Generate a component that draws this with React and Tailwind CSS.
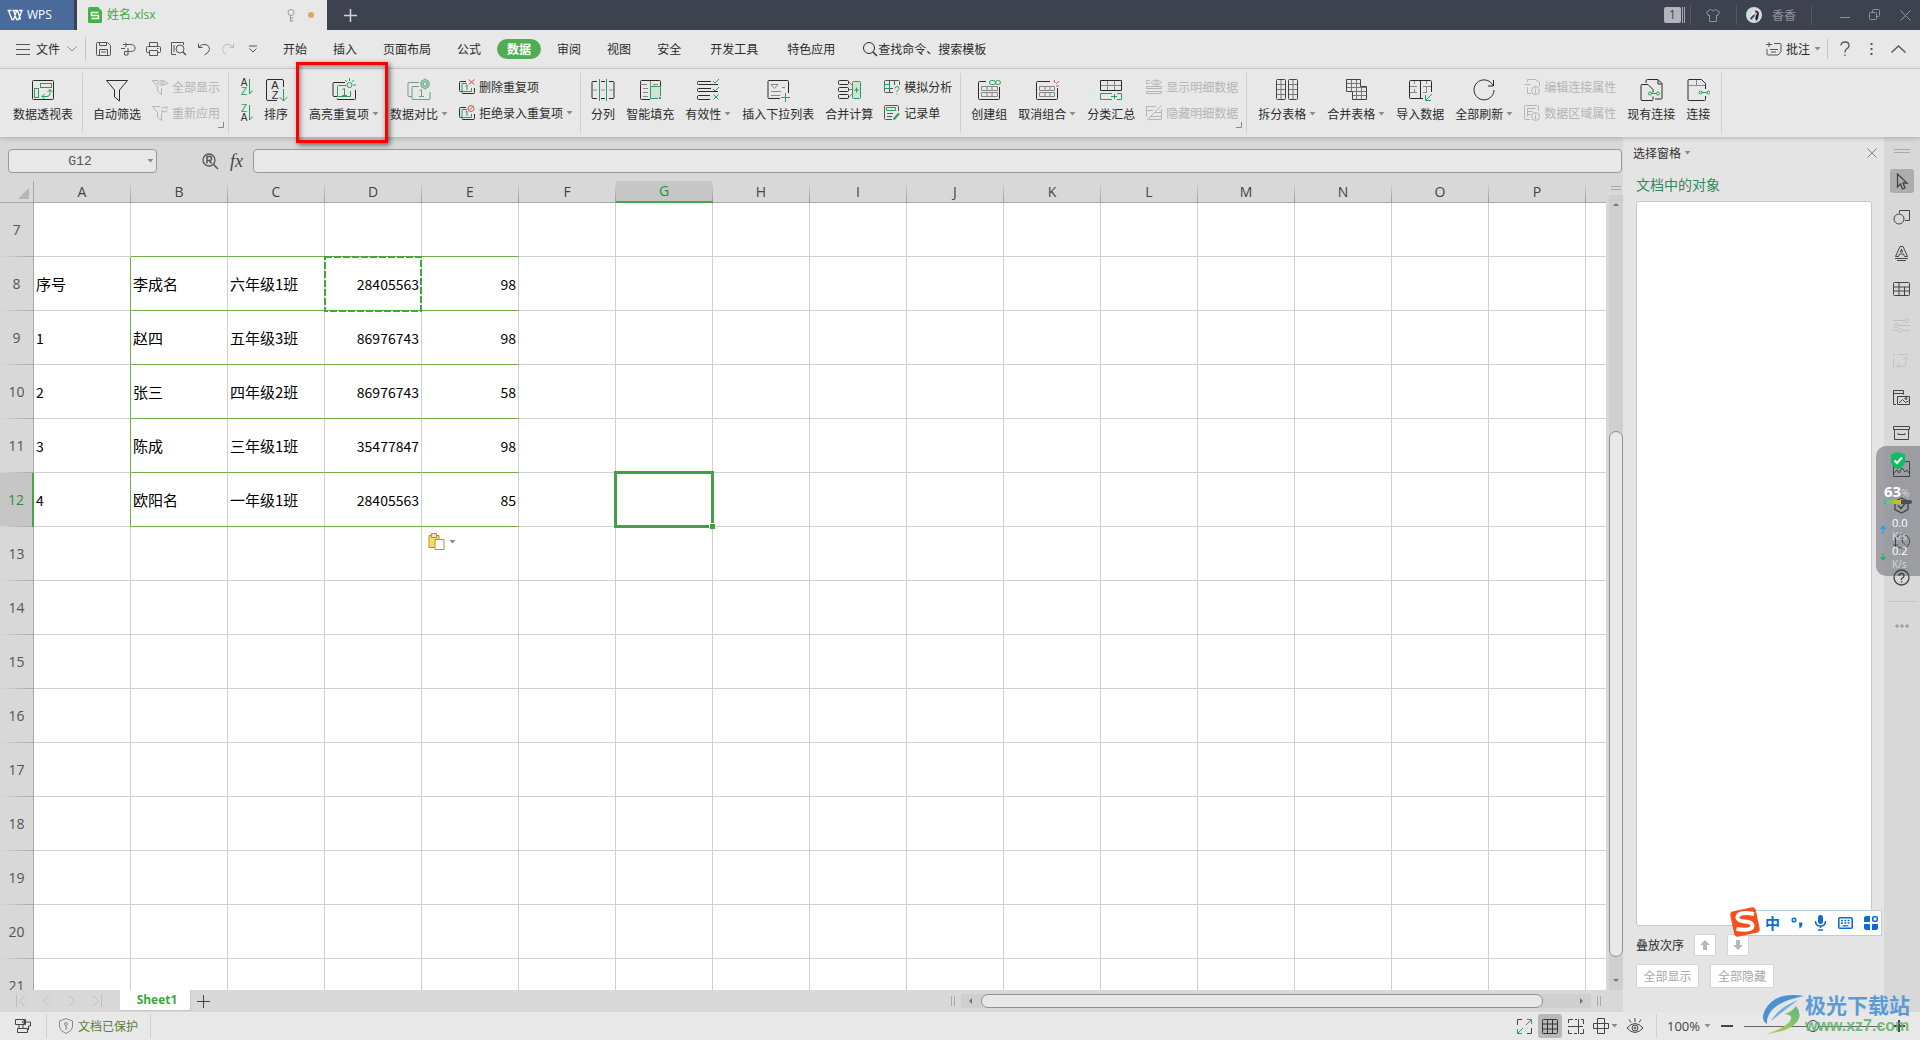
import React from 'react';
import clsx from 'clsx';

const GREEN = '#2a9d5c';
const RED = '#d9534f';

const COLUMNS = ['A', 'B', 'C', 'D', 'E', 'F', 'G', 'H', 'I', 'J', 'K', 'L', 'M', 'N', 'O', 'P'];
const ROWS = [7, 8, 9, 10, 11, 12, 13, 14, 15, 16, 17, 18, 19, 20, 21];

const CELLS = {
  8: { A: '序号', B: '李成名', C: '六年级1班', D: 28405563, E: 98 },
  9: { A: '1', B: '赵四', C: '五年级3班', D: 86976743, E: 98 },
  10: { A: '2', B: '张三', C: '四年级2班', D: 86976743, E: 58 },
  11: { A: '3', B: '陈成', C: '三年级1班', D: 35477847, E: 98 },
  12: { A: '4', B: '欧阳名', C: '一年级1班', D: 28405563, E: 85 },
};

function Icon({ w = 24, h = w, className, children }) {
  return (
    <svg
      width={w}
      height={h}
      viewBox={`0 0 ${w} ${h}`}
      fill="none"
      stroke="currentColor"
      className={clsx('shrink-0', className)}
      aria-hidden="true"
    >
      {children}
    </svg>
  );
}

function Glyph({ x, y, size = 12, color = 'currentColor', children }) {
  return (
    <text x={x} y={y} fontSize={size} fill={color} stroke="none" textAnchor="middle" fontFamily="Liberation Sans, sans-serif">
      {children}
    </text>
  );
}

function Caret({ className }) {
  return (
    <Icon w={7} h={4} className={clsx('text-[#8a8a8a]', className)}>
      <path d="M0.5 0h6l-3 3.5z" fill="currentColor" stroke="none" />
    </Icon>
  );
}

/* ---------- ribbon icons, 24x24 ---------- */

const PivotIcon = () => (
  <Icon>
    <rect x="1.5" y="2.5" width="21" height="19" rx="1" />
    <g stroke={GREEN}>
      <rect x="9.5" y="5.5" width="11" height="4" />
      <rect x="3.5" y="10.5" width="4" height="9" />
      <path d="M11 18.5h5q3 0 3-3v-4M16.500 14l2.500-2.500 2.500 2.500M13.500 16l-2.500 2.500 2.500 2.500" />
    </g>
  </Icon>
);

const FilterIcon = () => (
  <Icon>
    <path d="M1.500 2.500h21l-8 9.500v11l-5-4v-7z" />
  </Icon>
);

const SortBoxIcon = () => (
  <Icon>
    <path d="M13 22.500H4q-1.500 0-1.500-1.500V3q0-1.500 1.500-1.500h14q1.500 0 1.500 1.500v6" />
    <Glyph x={11} y={11} size={11}>A</Glyph>
    <Glyph x={11} y={21} size={11}>Z</Glyph>
    <path d="M19.500 11v12M15.500 19l4 4 4-4" stroke={GREEN} />
  </Icon>
);

const HighlightIcon = () => (
  <Icon>
    <path d="M13 4.500H2q-1 0-1 1v12q0 1 1 1h3M23.500 12v8.500q0 1-1 1H6q-1 0-1-1" />
    <path d="M14 7.500H6.500q-1 0-1 1v10h13V13M10.500 11.500l2-1v7.500M10 17.500h5" stroke={GREEN} />
    <g stroke={GREEN}>
      <circle cx="17.500" cy="7" r="2.500" />
      <path d="M17.500 0v3M13 2l2 2M22 2l-2 2M24 7h-3" />
    </g>
  </Icon>
);

const CompareIcon = () => (
  <Icon className="text-[#8a8f8c]">
    <path d="M12 4.500H2q-1 0-1 1v12q0 1 1 1h3" />
    <path d="M12 8.500H6q-1 0-1 1v11q0 1 1 1h16q1 0 1-1V14" stroke="#5fa57f" />
    <path d="M12.500 12.500l2-1v7M12 18.500h5" stroke="#5fa57f" />
    <path d="M18 1l4 2.500v5L18 11l-4-2.500v-5z" fill="#a9c9b6" stroke="#6ba888" />
    <circle cx="18" cy="6" r="2" stroke="#6ba888" fill="#e8e8e8" />
  </Icon>
);

const SplitIcon = () => (
  <Icon>
    <path d="M6 3.500H2q-1 0-1 1v15q0 1 1 1h4M18 3.500h4q1 0 1 1v15q0 1-1 1h-4M10 3.500h4M10 20.500h4" />
    <path d="M1 12h5M10 12h4M18 12h5" stroke="#888" />
    <path d="M8.500 1v22M15.500 1v22" stroke={GREEN} />
  </Icon>
);

const SmartFillIcon = () => (
  <Icon>
    <path d="M22.500 8V3.500q0-1-1-1h-18q-1 0-1 1v17q0 1 1 1H12" />
    <path d="M12.500 3v5M2 6.500h7M15 6.500h5M5 10.500h5M5 14.500h5M5 18.500h5" stroke="#888" />
    <path d="M20 20.500h-7.500v-12h10V18" fill="#cfe3d7" stroke={GREEN} />
    <rect x="21" y="19" width="2" height="2" fill={GREEN} stroke="none" />
  </Icon>
);

const ValidIcon = () => (
  <Icon>
    <path d="M15 3.500H2.500q-1 0-1 1v1q0 1 1 1H22M15 10.500H2.500q-1 0-1 1v1q0 1 1 1H22M14 17.500H2.500q-1 0-1 1v2q0 1 1 1H14" />
    <path d="M17 3l2 2 4-4M17 11l2 2 4-4M17.500 16.500l5 5M22.500 16.500l-5 5" stroke={GREEN} />
  </Icon>
);

const DropListIcon = () => (
  <Icon>
    <path d="M22.500 15V3.500q0-1-1-1H3q-1 0-1 1v16q0 1 1 1h11" />
    <path d="M5 6.500h7l-3.500 4zM5 13.500h10M5 17.500h9M16 9.500h3" stroke="#888" />
    <path d="M15 19.500h9M19.500 15v9" stroke={GREEN} />
  </Icon>
);

const MergeCalcIcon = () => (
  <Icon>
    <rect x="1.500" y="2.500" width="10" height="4" rx="1" />
    <rect x="1.500" y="9.500" width="10" height="4" rx="1" />
    <rect x="1.500" y="16.500" width="10" height="4" rx="1" />
    <path d="M12 4l3 3M12 11.500h3M12 19l3-3" stroke="#888" />
    <rect x="15.500" y="3.500" width="8" height="17" rx="1" fill="#cfe3d7" stroke={GREEN} />
    <path d="M17 12h5M19.500 9.500v5" stroke={GREEN} />
  </Icon>
);

const GroupIcon = () => (
  <Icon>
    <path d="M9 3.500H2.500q-1 0-1 1v16q0 1 1 1h19q1 0 1-1V9" />
    <path d="M4.500 8.500h16v4h-16zM4.500 14.500h16v4h-16zM10 8.500v4M15 8.500v4M10 14.500v4M15 14.500v4" stroke="#888" />
    <rect x="12.500" y="2.500" width="6" height="4" rx="2" stroke={GREEN} />
    <rect x="18.500" y="2.500" width="5" height="4" rx="2" stroke={GREEN} />
  </Icon>
);

const UngroupIcon = () => (
  <Icon>
    <path d="M15 3.500H2.500q-1 0-1 1v16q0 1 1 1h19q1 0 1-1V10" />
    <path d="M4.500 8.500h15v4h-15zM4.500 14.500h15v4h-15zM10 8.500v4M15 8.500v4M10 14.500v4M15 14.500v4" stroke="#888" />
    <path d="M19 2l1 3M24 3l-3 3M24 8h-3" stroke={RED} />
  </Icon>
);

const SubtotalIcon = () => (
  <Icon>
    <path d="M1.500 2.500h21v10h-21z" />
    <path d="M2 7.500h20M8.500 3v9M15.500 3v9" stroke="#888" />
    <path d="M13 15.500H1.500v6H13M18 15.500h4.500v6H18M12 18.500h6M15.500 16v5" stroke={GREEN} />
  </Icon>
);

const SplitTableIcon = () => (
  <Icon className="text-[#444]">
    <rect x="1.500" y="1.500" width="9" height="20" rx="1" />
    <rect x="13.500" y="1.500" width="9" height="20" rx="1" />
    <path d="M2 6.500h8M2 11.500h8M2 16.500h8M6 2v19M14 6.500h8M14 11.500h8M14 16.500h8M18 2v19" stroke="#777" />
  </Icon>
);

const MergeTableIcon = () => (
  <Icon className="text-[#444]">
    <path d="M2.500 1.500h14v7h6v13h-14v-8h-6z" />
    <path d="M3 5.500h13M3 9.500h19M9 13.500h13M9 17.500h13M7.500 2v11M12.500 2v19M17.500 9v12" stroke="#777" />
  </Icon>
);

const ImportIcon = () => (
  <Icon>
    <path d="M15 20.500H2.500q-1 0-1-1v-16q0-1 1-1h20q1 0 1 1V14M12.500 3v17" />
    <path d="M2 8.500h7M15 8.500h8M2 14.500h7M15 14.500h4M6.500 3v3M6.500 11v3M18.500 3v3M18.500 9v5" stroke="#888" />
    <path d="M24 16l-6 6M17.500 17v5.500H23" stroke={GREEN} />
  </Icon>
);

const RefreshIcon = () => (
  <Icon>
    <path d="M21 7.500A10 10 0 1 0 22 12M21.500 2v6H16" />
  </Icon>
);

const ConnectionsIcon = () => (
  <Icon>
    <path d="M7 5V3q0-1.500 1.500-1.500H19l4 4V20q0 1-1 1h-6M9 6.500H3q-1 0-1 1v14q0 1 1 1h10q1 0 1-1v-3M9 6.500l5 5v3M19 2v4h4" />
    <path d="M12 15.500h6" stroke={GREEN} />
    <circle cx="11" cy="15.500" r="1.500" stroke={GREEN} />
    <circle cx="19" cy="15.500" r="1.500" stroke={GREEN} />
  </Icon>
);

const ConnectIcon = () => (
  <Icon>
    <path d="M19.500 11V5.500l-4-4H3q-1 0-1 1v19q0 1 1 1h15.500q1 0 1-1V18" />
    <path d="M2 7.500h17M10.500 2v5" stroke="#888" />
    <path d="M15.500 14.500h6" stroke={GREEN} />
    <circle cx="14.500" cy="14.500" r="1.500" stroke={GREEN} />
    <circle cx="22.500" cy="14.500" r="1.500" stroke={GREEN} />
  </Icon>
);

/* ---------- small ribbon icons, 16x16 ---------- */

const ShowAllIcon = () => (
  <Icon w={16}>
    <path d="M6 1.500H.5l5 6V12l4 3.500V9" />
    <path d="M5 4q5-5 10.500 0Q10 8.500 5 4z" />
    <circle cx="10.500" cy="4" r="1.500" />
  </Icon>
);

const ReapplyIcon = () => (
  <Icon w={16}>
    <path d="M8 1.500H.5l5 6V12l4 3.500V9M9.500 3.500q3-3 5.500 0V1M15.500 5.500q-3 3-5.500 0v3" />
  </Icon>
);

const RemoveDupIcon = () => (
  <Icon w={16}>
    <path d="M7 2.500H1.500q-1 0-1 1v8q0 1 1 1H3M15.500 9v4.500q0 1-1 1H4q-1 0-1-1" />
    <path d="M8 4.500H3v8h9.500V9M6.500 7l1.500-1v5" stroke={GREEN} />
    <path d="M9.500.5l6 5M15.500.5l-6 5" stroke={RED} />
  </Icon>
);

const RejectDupIcon = () => (
  <Icon w={16}>
    <path d="M7 2.500H1.500q-1 0-1 1v8q0 1 1 1H3M15.500 9v4.500q0 1-1 1H4q-1 0-1-1" />
    <path d="M8 4.500H3v8h9.500V9M6.500 7l1.500-1v5" stroke={GREEN} />
    <circle cx="12" cy="3.500" r="3" stroke={RED} />
    <path d="M10 5.500l4-4" stroke={RED} />
  </Icon>
);

const WhatIfIcon = () => (
  <Icon w={16}>
    <path d="M9 13.500H1.500q-1 0-1-1v-10q0-1 1-1h13q1 0 1 1V6M5.500 2v11M10.500 2v4M1 9.500h8" stroke="#555" />
    <path d="M.5 5.500h5v4h-5z" stroke={GREEN} />
    <path d="M11 9.500q0-2 2-2t2 2q0 1-2 2.500v1M13 14.500v1" stroke={GREEN} />
  </Icon>
);

const RecordIcon = () => (
  <Icon w={16}>
    <path d="M8 14.500H1.500q-1 0-1-1v-12q0-1 1-1h12q1 0 1 1V6M3 8.500h6M3 11.500h5" stroke="#555" />
    <path d="M2.500 2.500h9v3h-9z" stroke={GREEN} />
    <path d="M9.500 14.500l5.500-6" stroke={GREEN} strokeWidth="2" />
  </Icon>
);

const ShowDetailIcon = () => (
  <Icon w={16}>
    <path d="M4 1.500H.5v3H4M.5 7.500h15v2H.5zM.5 12.500h15v2H.5z" />
    <path d="M5 3.500q5-5 10.500 0-5.500 5-10.500 0z" />
    <circle cx="10.500" cy="3.500" r="1.500" />
  </Icon>
);

const HideDetailIcon = () => (
  <Icon w={16}>
    <path d="M.5 1.500H10M.5 5.500H7M.5 1.500v10M.5 15.500l15-15M8 7.500h7.500M5 11.500h10.500M3 14.500h12.500v-10" />
  </Icon>
);

const EditLinkIcon = () => (
  <Icon w={16}>
    <path d="M3.500 3V.5h8l4 3V7M3.500 8v6.500H7M.5 5.500h6" />
    <circle cx="11.500" cy="11.500" r="4" />
    <path d="M11.500 10.500v4M11.500 8.500v1" />
  </Icon>
);

const RangeAttrIcon = () => (
  <Icon w={16}>
    <path d="M6 14.500H1.500q-1 0-1-1v-12q0-1 1-1h12q1 0 1 1V6M3.500 3.500h8M3.500 6.500h5M3.500 9.500h3M3.500 3.500v8" />
    <circle cx="11.500" cy="11.500" r="4" />
    <path d="M11.500 10.500v4M11.500 8.500v1" />
  </Icon>
);

function SortIcon({ first, second, firstColor, secondColor }) {
  return (
    <Icon w={14} h={18}>
      <Glyph x={5} y={8} size={10} color={firstColor}>{first}</Glyph>
      <Glyph x={5} y={17} size={10} color={secondColor}>{second}</Glyph>
      <path d="M10.500 1v15M13.500 12.500l-3 3.500" stroke={GREEN} />
    </Icon>
  );
}

/* ---------- ribbon ---------- */

function BigButton({ icon, label, caret, className, children }) {
  return (
    <button type="button" className={clsx('relative flex shrink-0 flex-col items-center gap-1 pt-[9px] text-[#2b2b2b]', className)}>
      {icon}
      <span className="flex items-center gap-[3px] leading-4 whitespace-nowrap">
        {label}
        {caret && <Caret />}
      </span>
      {children}
    </button>
  );
}

function SmallColumn({ items, disabled }) {
  return (
    <div className={clsx('flex shrink-0 flex-col gap-[10px] pt-[10px]', disabled ? 'text-[#b5b5b5]' : 'text-[#2b2b2b]')}>
      {items.map((item) => (
        <button key={item.label} type="button" disabled={disabled} className="flex items-center gap-1 leading-4 whitespace-nowrap">
          {item.icon}
          <span className="flex items-center gap-[3px]">
            {item.label}
            {item.caret && <Caret />}
          </span>
        </button>
      ))}
    </div>
  );
}

function RibbonGroup({ corner, className, children }) {
  return (
    <div className={clsx('relative my-1 flex shrink-0 gap-[11px] border-r border-[#cfcfcf]', className)}>
      {children}
      {corner && (
        <Icon w={6} className="absolute right-1 bottom-[5px] text-[#888]">
          <path d="M5.500 0v5.500H0" />
        </Icon>
      )}
    </div>
  );
}

function Ribbon() {
  return (
    <div className="relative z-10 flex h-[68px] shrink-0 bg-[#e8e8e8] shadow-[0_1px_5px_rgba(0,0,0,0.22)] [&>div>*]:-mt-1">
      <RibbonGroup className="pr-[9px] pl-[13px]">
        <BigButton icon={<PivotIcon />} label="数据透视表" />
      </RibbonGroup>
      <RibbonGroup className="pr-2 pl-[10px]" corner>
        <BigButton icon={<FilterIcon />} label="自动筛选" />
        <SmallColumn
          disabled
          items={[
            { icon: <ShowAllIcon />, label: '全部显示' },
            { icon: <ReapplyIcon />, label: '重新应用' },
          ]}
        />
      </RibbonGroup>
      <RibbonGroup className="pr-[7px] pl-[10px]">
        <div className="flex flex-col gap-2 pt-[9px]">
          <button type="button" aria-label="升序">
            <SortIcon first="A" second="Z" firstColor="#333" secondColor={GREEN} />
          </button>
          <button type="button" aria-label="降序">
            <SortIcon first="Z" second="A" firstColor={GREEN} secondColor="#333" />
          </button>
        </div>
        <BigButton icon={<SortBoxIcon />} label="排序" />
        <BigButton icon={<HighlightIcon />} label="高亮重复项" caret className="ml-[10px]">
          {/* callout frame */}
          <span className="pointer-events-none absolute -top-[7px] -left-[13px] h-[81px] w-[92px] border-[3px] border-[#ff0000] shadow-[2px_2px_5px_rgba(0,0,0,0.55),inset_1px_1px_5px_rgba(0,0,0,0.5)]" />
        </BigButton>
        <BigButton icon={<CompareIcon />} label="数据对比" caret />
        <SmallColumn
          items={[
            { icon: <RemoveDupIcon />, label: '删除重复项' },
            { icon: <RejectDupIcon />, label: '拒绝录入重复项', caret: true },
          ]}
        />
      </RibbonGroup>
      <RibbonGroup className="pr-2 pl-[10px]">
        <BigButton icon={<SplitIcon />} label="分列" />
        <BigButton icon={<SmartFillIcon />} label="智能填充" />
        <BigButton icon={<ValidIcon />} label="有效性" caret />
        <BigButton icon={<DropListIcon />} label="插入下拉列表" />
        <BigButton icon={<MergeCalcIcon />} label="合并计算" />
        <SmallColumn
          items={[
            { icon: <WhatIfIcon />, label: '模拟分析' },
            { icon: <RecordIcon />, label: '记录单' },
          ]}
        />
      </RibbonGroup>
      <RibbonGroup className="pr-2 pl-[10px]" corner>
        <BigButton icon={<GroupIcon />} label="创建组" />
        <BigButton icon={<UngroupIcon />} label="取消组合" caret />
        <BigButton icon={<SubtotalIcon />} label="分类汇总" />
        <SmallColumn
          disabled
          items={[
            { icon: <ShowDetailIcon />, label: '显示明细数据' },
            { icon: <HideDetailIcon />, label: '隐藏明细数据' },
          ]}
        />
      </RibbonGroup>
      <RibbonGroup className="pr-[11px] pl-[11px]">
        <BigButton icon={<SplitTableIcon />} label="拆分表格" caret />
        <BigButton icon={<MergeTableIcon />} label="合并表格" caret />
        <BigButton icon={<ImportIcon />} label="导入数据" />
        <BigButton icon={<RefreshIcon />} label="全部刷新" caret />
        <SmallColumn
          disabled
          items={[
            { icon: <EditLinkIcon />, label: '编辑连接属性' },
            { icon: <RangeAttrIcon />, label: '数据区域属性' },
          ]}
        />
        <BigButton icon={<ConnectionsIcon />} label="现有连接" />
        <BigButton icon={<ConnectIcon />} label="连接" />
      </RibbonGroup>
    </div>
  );
}

/* ---------- title bar and menu ---------- */

function TitleBar() {
  return (
    <header className="flex h-[30px] shrink-0 bg-[#3e424e] text-[#8f939d]">
      <button type="button" className="flex w-[74px] items-center gap-1 bg-[#4a6a9c] pl-[7px] font-['Open_Sans',sans-serif] text-[12px] text-white">
        <Icon w={16} h={12}>
          <path d="M.5 1.500h4M1.500 1.500l3.500 9h1.500l3-8.500M5.500 1.500h5l3 9M6.500 1.500l3 9h2l3.500-9h-3" strokeWidth="1.300" />
        </Icon>
        WPS
      </button>
      <div className="ml-[3px] flex w-[250px] items-center bg-[#e8e8e8] pr-[13px] pl-[11px]">
        <Icon w={14} h={16}>
          <path d="M1.500 0H10l4 4v10.500q0 1.500-1.500 1.500h-11Q0 16 0 14.500v-13Q0 0 1.500 0z" fill="#45b045" stroke="none" />
          <path d="M10.500 5.500h-7v3h7v3h-7" stroke="#fff" strokeWidth="1.500" />
        </Icon>
        <span className="ml-[5px] font-['Open_Sans','Noto_Sans_CJK_SC',sans-serif] text-[12px] text-[#3ea73e]">姓名.xlsx</span>
        <Icon w={8} h={13} className="ml-auto text-[#999]">
          <circle cx="4" cy="3.500" r="3" />
          <path d="M3.500 6.500v6M3.500 9h3M3.500 12h3" />
        </Icon>
        <span className="ml-[13px] size-[6px] rounded-full bg-[#e8a35a]" />
      </div>
      <button type="button" aria-label="新建" className="ml-[17px] text-[#d0d2d6]">
        <Icon w={13}>
          <path d="M6.500 0v13M0 6.500h13" strokeWidth="1.500" />
        </Icon>
      </button>
      <div className="ml-auto flex items-center pr-[9px]">
        <span className="flex h-4 items-center gap-px">
          <span className="flex h-4 w-[17px] items-center justify-center rounded-[2px] bg-[#b3b5ba] font-['Open_Sans',sans-serif] text-[12px] text-[#444]">1</span>
          <span className="h-4 w-px bg-[#a5a7ad]" />
          <span className="h-4 w-px bg-[#a5a7ad]" />
        </span>
        <span className="ml-[5px] h-5 w-px bg-[#555964]" />
        <Icon w={14} h={13} className="ml-[15px]">
          <path d="M4.500.5L.5 3l1.500 3.500 1.500-.5v6.500h7V6l1.500.5L13.500 3 9.500.5Q7 3.500 4.500.5z" />
        </Icon>
        <span className="ml-4 h-5 w-px bg-[#555964]" />
        <svg width="16" height="16" viewBox="0 0 16 16" className="ml-[9px]" aria-hidden="true">
          <circle cx="8" cy="8" r="8" fill="#cfdce2" />
          <path d="M4 11q2-6 5-7l2 2-3 5z" fill="#f4f6f7" />
          <path d="M9 3.500q3-.5 4 2.500l-1 6-2 2q-1.500-3 0-6z" fill="#2b2730" />
          <path d="M4 11l4-4 1 2-4 4z" fill="#4a4650" />
          <circle cx="9.500" cy="6.500" r="1.500" fill="#dfae9c" />
        </svg>
        <span className="ml-[10px] text-[12px]">香香</span>
        <span className="ml-[15px] h-5 w-px bg-[#555964]" />
        <button type="button" aria-label="最小化" className="ml-7">
          <Icon w={10}>
            <path d="M0 7.500h10" />
          </Icon>
        </button>
        <button type="button" aria-label="还原" className="ml-[19px]">
          <Icon w={12}>
            <rect x=".5" y="3.500" width="7" height="7" rx="1" />
            <path d="M3.500 3V1.500q0-1 1-1h5q1 0 1 1v5q0 1-1 1H8" />
          </Icon>
        </button>
        <button type="button" aria-label="关闭" className="ml-[19px]">
          <Icon w={11}>
            <path d="M.5.5l10 10M10.500.5l-10 10" />
          </Icon>
        </button>
      </div>
    </header>
  );
}

const TABS = [
  { label: '开始' },
  { label: '插入' },
  { label: '页面布局' },
  { label: '公式' },
  { label: '数据', active: true },
  { label: '审阅' },
  { label: '视图' },
  { label: '安全' },
  { label: '开发工具', wide: true },
  { label: '特色应用' },
];

function MenuBar() {
  return (
    <nav className="flex h-[39px] shrink-0 items-center border-b border-[#d4d4d4] bg-[#e8e8e8] pr-[14px] pl-4 text-[#2b2b2b]">
      <button type="button" className="flex items-center leading-4">
        <Icon w={14} h={11}>
          <path d="M0 .5h14M0 5.500h14M0 10.500h14" stroke="#555" />
        </Icon>
        <span className="ml-[6px]">文件</span>
        <Icon w={10} h={6} className="ml-[7px] text-[#888]">
          <path d="M.5.5l4.500 4.500L9.500.5" />
        </Icon>
      </button>
      <span className="ml-2 h-6 w-px bg-[#c4c4c4]" />
      <div className="ml-[10px] flex items-center gap-[10px] text-[#555]">
        <button type="button" aria-label="保存">
          <Icon w={15} h={14}>
            <path d="M.5 1.500q0-1 1-1h10l3 3v9q0 1-1 1h-12q-1 0-1-1zM3.500.5v3h7v-3M3.500 13.500v-6h8v6M5 10h5" />
          </Icon>
        </button>
        <button type="button" aria-label="输出为PDF">
          <Icon w={15} h={14}>
            <path d="M2 2.500h7.500q4.500 0 4.500 3.500t-4.500 3.500H7v3.500H3.500V9.500H7M7 9.500V6M4 .5L6 2.500 4 5M0 6.500h4" />
          </Icon>
        </button>
        <button type="button" aria-label="打印">
          <Icon w={15} h={14}>
            <path d="M3.500 4V.5h8V4M3 10.500H1.500q-1 0-1-1v-4q0-1 1-1h12q1 0 1 1v4q0 1-1 1H12M3.500 8.500h8v5h-8zM11 6.500h1.500" />
          </Icon>
        </button>
        <button type="button" aria-label="打印预览">
          <Icon w={16} h={14}>
            <path d="M5 12.500H.5V.5h12V3M3 3v7" />
            <circle cx="9" cy="7" r="4" />
            <path d="M12 10l3 3" strokeWidth="1.500" />
          </Icon>
        </button>
        <button type="button" aria-label="撤销">
          <Icon w={14} h={14}>
            <path d="M1.500 1.500v4h4M2 5q3-3.500 7-2.500 4 1.500 3.500 5-.5 3-5 5.500" />
          </Icon>
        </button>
        <button type="button" aria-label="恢复" className="text-[#bdbdbd]">
          <Icon w={14} h={14}>
            <path d="M12.500 1.500v4h-4M12 5Q9 1.500 5 2.500 1 4 1.500 7.500 2 10.500 5 12.500" />
          </Icon>
        </button>
        <button type="button" aria-label="自定义快速访问工具栏" className="ml-1">
          <Icon w={8} h={8}>
            <path d="M0 1h8M.5 3.500L4 7l3.500-3.500" />
          </Icon>
        </button>
      </div>
      <div className="ml-[13px] flex items-center">
        {TABS.map((tab) => (
          <button
            key={tab.label}
            type="button"
            className={clsx(
              'h-5 leading-5 whitespace-nowrap',
              tab.active && 'mx-[3px] rounded-full bg-[#4fae53] px-[10px] font-bold text-white',
              !tab.active && (tab.wide ? 'px-4' : 'px-[13px]'),
            )}
          >
            {tab.label}
          </button>
        ))}
      </div>
      <button type="button" className="ml-[14px] flex items-center whitespace-nowrap">
        <Icon w={16}>
          <circle cx="7" cy="7" r="5.500" />
          <path d="M11 11l4 4" strokeWidth="1.500" />
        </Icon>
        查找命令、搜索模板
      </button>
      <div className="ml-auto flex items-center text-[#555]">
        <button type="button" className="flex items-center gap-1 whitespace-nowrap text-[#2b2b2b]">
          <Icon w={16} h={14}>
            <path d="M3 0v5M0 2.500h6M8 1.500h6q1 0 1 1v7l-3 3.500H2q-1 0-1-1V7M4 7.500h8M5 10h5" stroke="#555" />
          </Icon>
          批注
          <Caret />
        </button>
        <span className="ml-[6px] h-5 w-px bg-[#c4c4c4]" />
        <button type="button" aria-label="帮助" className="ml-3">
          <Icon w={10} h={16}>
            <path d="M1 4.500Q1 1 5 1t4 3.500Q9 6.500 6.500 8 5 9 5 11.500M5 13.500v1.500" strokeWidth="1.300" />
          </Icon>
        </button>
        <button type="button" aria-label="更多" className="ml-5">
          <Icon w={3} h={13}>
            <path d="M1.500 0v2M1.500 5v2M1.500 10v2" strokeWidth="2" />
          </Icon>
        </button>
        <button type="button" aria-label="隐藏功能区" className="ml-[18px]">
          <Icon w={15} h={8}>
            <path d="M.5 7.500L7.500 1l7 6.500" strokeWidth="1.300" />
          </Icon>
        </button>
      </div>
    </nav>
  );
}

/* ---------- sheet ---------- */

function FormulaBar() {
  return (
    <div className="flex h-[44px] shrink-0 items-start bg-[#d8d8d8] pt-3 pr-px pl-2">
      <div className="flex h-6 w-[149px] items-center rounded-[4px] border border-[#999] bg-[#e8e8e8] pr-[2px]">
        <input
          aria-label="名称框"
          defaultValue="G12"
          className="min-w-0 flex-1 bg-transparent pt-[2px] pl-1 text-center font-['Liberation_Mono',monospace] text-[13px] text-[#555] outline-none"
        />
        <Caret />
      </div>
      <button type="button" aria-label="查找" className="mt-1 ml-[45px] text-[#555]">
        <Icon w={17}>
          <circle cx="7" cy="7" r="6" strokeWidth="1.300" />
          <path d="M5 10.500v-7h3q1.500 0 1.500 2T8 7.500H5M7.500 7.500l2 3M11.500 11.500l4.500 4.500" strokeWidth="1.500" />
        </Icon>
      </button>
      <button type="button" aria-label="插入函数" className="ml-[9px] h-6 w-[17px] font-['Liberation_Serif',serif] text-[18px] leading-5 text-[#444] italic">
        fx
      </button>
      <input aria-label="编辑栏" className="ml-2 h-6 min-w-0 flex-1 rounded-[4px] border border-[#999] bg-[#e8e8e8] px-2 outline-none" />
    </div>
  );
}

function PasteOptions() {
  return (
    <button type="button" aria-label="粘贴选项" className="absolute top-[6px] left-[6px] flex items-center gap-1">
      <Icon w={17}>
        <path d="M1 2.500h10v12H1z" fill="#ffd966" stroke="#b8912c" />
        <path d="M3.500.5h5v4h-5z" fill="#e9e2cc" stroke="#b8912c" />
        <path d="M7 6.500h9v10H7z" fill="#fff" stroke="#b8912c" />
      </Icon>
      <Caret />
    </button>
  );
}

function Cell({ row, col }) {
  const value = CELLS[row]?.[col];
  const inTable = 'BCDE'.includes(col);
  return (
    <td
      className={clsx(
        'relative h-[54px] border-r border-b px-[2px] whitespace-nowrap text-black',
        inTable && row >= 7 && row <= 12 ? 'border-b-[#70ad47]' : 'border-b-[#d0d0d0]',
        col === 'A' && row >= 8 && row <= 12 ? 'border-r-[#70ad47]' : 'border-r-[#d0d0d0]',
        typeof value === 'number' && 'text-right',
        typeof value === 'number' || (col === 'A' && row > 8) ? 'text-[14px]' : 'text-[15px]',
      )}
    >
      {value}
      {row === 8 && col === 'D' && (
        <svg className="pointer-events-none absolute -top-px -left-px z-10 h-[56px] w-[99px]" aria-hidden="true">
          <rect x="1" y="1" width="96" height="54" fill="none" stroke="#3fa73f" strokeWidth="2" strokeDasharray="7 2" />
        </svg>
      )}
      {row === 12 && col === 'G' && (
        <span className="pointer-events-none absolute -inset-[2px] z-10 border-[3px] border-[#43a047]">
          <span className="absolute -right-[4px] -bottom-[4px] size-[6px] border-t border-l border-white bg-[#43a047]" />
        </span>
      )}
      {row === 13 && col === 'E' && <PasteOptions />}
    </td>
  );
}

function Sheet() {
  return (
    <div className="flex min-h-0 flex-1 bg-[#d8d8d8]">
      <div className="min-w-0 flex-1 overflow-hidden bg-white">
        <table className="w-full table-fixed border-separate border-spacing-0">
          <colgroup>
            <col className="w-[34px]" />
            {COLUMNS.map((c) => (
              <col key={c} className="w-[97px]" />
            ))}
            <col />
          </colgroup>
          <thead className="bg-[#d8d8d8] font-['Open_Sans',sans-serif] text-[14px] text-[#444]">
            <tr>
              <th className="border-r border-b border-[#a8a8a8] p-0" aria-label="全选">
                <Icon w={11} className="mt-[3px] ml-[18px]">
                  <path d="M11 0v11H0z" fill="#b5b5b5" stroke="none" />
                </Icon>
              </th>
              {COLUMNS.map((c) => (
                <th
                  key={c}
                  scope="col"
                  className={clsx(
                    'h-[22px] p-0 font-normal',
                    c === 'G' ? 'border-b-2 border-[#43a843] bg-[#c6c6c6] text-[#2f8f3a]' : 'border-b border-[#a8a8a8]',
                  )}
                >
                  <div className="flex h-5 leading-5">
                    <span className="flex-1">{c}</span>
                    <span className="w-px bg-linear-to-b from-[#d8d8d8] to-[#9c9c9c]" />
                  </div>
                </th>
              ))}
              <th className="border-b border-[#a8a8a8] p-0" />
            </tr>
          </thead>
          <tbody>
            {ROWS.map((r) => (
              <tr key={r}>
                <th
                  scope="row"
                  className={clsx(
                    "h-[54px] p-0 font-['Open_Sans',sans-serif] text-[14px] font-normal",
                    r === 12 ? 'border-r-2 border-[#43a843] bg-[#c6c6c6] text-[#2f8f3a]' : 'border-r border-[#a8a8a8] bg-[#d8d8d8] text-[#555]',
                  )}
                >
                  <div className="flex h-[54px] flex-col">
                    <span className="flex flex-1 items-center justify-center">{r}</span>
                    <span className="h-px bg-linear-to-r from-[#d8d8d8] to-[#a8a8a8]" />
                  </div>
                </th>
                {COLUMNS.map((c) => (
                  <Cell key={c} row={r} col={c} />
                ))}
                <td className="border-b border-[#d0d0d0]" />
              </tr>
            ))}
          </tbody>
        </table>
      </div>
      {/* vertical scrollbar */}
      <div className="ml-[3px] flex w-[14px] flex-col">
        <Icon w={14} className="text-[#a8a8a8]">
          <path d="M2 5.500h10M2 8.500h10" />
        </Icon>
        <div className="flex flex-1 flex-col bg-[#cfcfcf]">
          <Icon w={14} className="text-[#777]">
            <path d="M4 11h6L7 8z" fill="currentColor" stroke="none" />
          </Icon>
          <span className="grow-[223] basis-0" />
          <span className="grow-[525] basis-0 rounded-full border border-[#8f8f8f] bg-[#e8e8e8]" />
          <span className="grow-[16] basis-0" />
          <Icon w={14} h={17} className="text-[#777]">
            <path d="M4 6h6L7 9z" fill="currentColor" stroke="none" />
          </Icon>
        </div>
      </div>
    </div>
  );
}

function SheetTabs() {
  return (
    <div className="flex h-[22px] shrink-0 bg-[#d8d8d8]">
      <div className="flex min-w-0 flex-1">
        <div className="flex w-[120px] items-center pl-4 text-[#bdbdbd]">
          <button type="button" aria-label="第一张">
            <Icon w={10} h={12}>
              <path d="M.5 0v12M9 .5L3.500 6 9 11.500" />
            </Icon>
          </button>
          <button type="button" aria-label="上一张" className="ml-4">
            <Icon w={8} h={12}>
              <path d="M7 .5L1.500 6 7 11.500" />
            </Icon>
          </button>
          <button type="button" aria-label="下一张" className="ml-[18px]">
            <Icon w={8} h={12}>
              <path d="M1 .5L6.500 6 1 11.500" />
            </Icon>
          </button>
          <button type="button" aria-label="最后一张" className="ml-4">
            <Icon w={10} h={12}>
              <path d="M9.500 0v12M1 .5L6.500 6 1 11.500" />
            </Icon>
          </button>
        </div>
        <button type="button" className="h-[21px] w-[71px] border-r border-b border-[#c4c4c4] bg-white pl-1 font-['Open_Sans',sans-serif] text-[12px] font-bold text-[#3ea73e]">
          Sheet1
        </button>
        <button type="button" aria-label="新建工作表" className="ml-[6px] text-[#444]">
          <Icon w={13}>
            <path d="M6.500 0v13M0 6.500h13" />
          </Icon>
        </button>
      </div>
      {/* horizontal scrollbar */}
      <div className="flex w-5/12 items-center gap-[6px] pr-[22px] pl-1 text-[#a8a8a8]">
        <Icon w={4} h={10}>
          <path d="M.5 0v10M3.500 0v10" />
        </Icon>
        <div className="flex h-[14px] flex-1 bg-[#cfcfcf] text-[#777]">
          <Icon w={16} h={14}>
            <path d="M11 4v6L8 7z" fill="currentColor" stroke="none" />
          </Icon>
          <span className="grow-[4] basis-0" />
          <span className="grow-[564] basis-0 rounded-full border border-[#8f8f8f] bg-[#e8e8e8]" />
          <span className="grow-[32] basis-0" />
          <Icon w={16} h={14}>
            <path d="M5 4v6l3-3z" fill="currentColor" stroke="none" />
          </Icon>
        </div>
        <Icon w={4} h={10}>
          <path d="M.5 0v10M3.500 0v10" />
        </Icon>
      </div>
    </div>
  );
}

/* ---------- side panel ---------- */

function SelectionPane() {
  return (
    <aside className="flex w-[261px] shrink-0 flex-col bg-[#e4e4e4] pr-3 pb-6 pl-[13px]">
      <div className="-ml-[3px] flex h-8 items-center text-[#333]">
        <button type="button" className="flex items-center gap-[3px]">
          选择窗格
          <Caret />
        </button>
        <button type="button" aria-label="关闭窗格" className="-mr-[5px] ml-auto text-[#888]">
          <Icon w={10}>
            <path d="M.5.5l9 9M9.500.5l-9 9" />
          </Icon>
        </button>
      </div>
      <h2 className="h-8 text-[14px] leading-[31px] text-[#2e8b57]">文档中的对象</h2>
      <div className="flex-1 rounded-[3px] border border-[#c8c8c8] bg-white" />
      <div className="flex items-center pt-2 text-[#2b2b2b]">
        <span>叠放次序</span>
        <button type="button" aria-label="上移" className="ml-[10px] flex size-[22px] items-center justify-center rounded-[2px] border border-[#d4d4d4] bg-white text-[#b8b8b8]">
          <Icon w={10}>
            <path d="M5 0l5 5H7v5H3V5H0z" fill="currentColor" stroke="none" />
          </Icon>
        </button>
        <button type="button" aria-label="下移" className="ml-[11px] flex size-[22px] items-center justify-center rounded-[2px] border border-[#d4d4d4] bg-white text-[#b8b8b8]">
          <Icon w={10}>
            <path d="M5 10l5-5H7V0H3v5H0z" fill="currentColor" stroke="none" />
          </Icon>
        </button>
      </div>
      <div className="flex gap-[11px] pt-2 text-[#a8a8a8]">
        <button type="button" className="h-6 w-[63px] rounded-[2px] border border-[#d4d4d4] bg-white">全部显示</button>
        <button type="button" className="h-6 w-[64px] rounded-[2px] border border-[#d4d4d4] bg-white">全部隐藏</button>
      </div>
    </aside>
  );
}

const RAIL = [
  {
    label: '选择',
    active: true,
    icon: <path d="M4.500 1v13l3-3 2 5 2.500-1-2-5h4z" strokeWidth="1.300" />,
  },
  {
    label: '形状',
    icon: (
      <>
        <circle cx="6" cy="10" r="5" />
        <path d="M6.500 4V1.500h10v10H12" />
      </>
    ),
  },
  {
    label: '样式',
    icon: <path d="M2.500 11.500L7 1.500h3l4.500 10h-3l-1-2.500h-4l-1 2.500zM7.500 7h2l-1-3zM2 13.500h13M4 15.500h9" />,
  },
  {
    label: '表格',
    icon: <path d="M.5 2.500q0-1 1-1h14q1 0 1 1v11q0 1-1 1h-14q-1 0-1-1zM1 6h16M1 10h16M6 2v12M11.500 6v8" />,
  },
  {
    label: '属性',
    muted: true,
    icon: (
      <>
        <path d="M0 3.500h12M5 8.500h12M0 13.500h5M9 13.500h8" />
        <circle cx="14" cy="3.500" r="2" />
        <circle cx="3" cy="8.500" r="2" />
        <circle cx="7" cy="13.500" r="2" />
      </>
    ),
  },
  {
    label: '透视',
    muted: true,
    icon: <path d="M4 1.500h11M.5 5v11M0 1.500h2M4 13.500h5q4 0 4-4v-5M10 7l3-3 3 3M7 10.500l-3 3 3 3" />,
  },
  {
    label: '图库',
    icon: (
      <>
        <path d="M3 15.500H.5V1.500h10v4M1 4.500h9M4.500 7.500h12v8h-12zM6 14l3.500-3.500 3 3 3-1.500" />
        <circle cx="13" cy="9.500" r="1" />
      </>
    ),
  },
  {
    label: '归档',
    icon: <path d="M.5 1.500h16v3H.5zM1.500 4.500h14v10h-14zM5 8v1.500h7V8" />,
  },
  {
    label: '图片',
    icon: <path d="M.5.5h16v15H.5zM1 12l3-3 2 3 3-5 3 4 2-2 2 3" />,
  },
  {
    label: '安全',
    icon: <path d="M8.500 1l6.500 3.500v8L8.500 16 2 12.500v-8zM5 8.500l3 3 4-5" strokeWidth="1.300" />,
  },
  {
    label: '历史',
    icon: <path d="M4 4a7 7 0 1 1 1 9.500M2.500 4v9M.5 11l2 2.500L5 11M9.500 4.500V9l3 3" />,
  },
  {
    label: '帮助',
    icon: (
      <>
        <circle cx="8.500" cy="8.500" r="7.500" strokeWidth="1.300" />
        <path d="M6 7q0-2.500 2.500-2.500T11 7q0 1-2.500 3v1M8.500 12v1.500" strokeWidth="1.300" />
      </>
    ),
  },
];

function SideRail() {
  return (
    <div className="flex w-9 shrink-0 flex-col items-center bg-[#d8d8d8]">
      <Icon w={16} h={4} className="mt-3 mb-4 text-[#a8a8a8]">
        <path d="M0 .5h16M0 3.500h16" />
      </Icon>
      <div className="relative z-30 flex flex-col gap-3">
        {RAIL.map((item) => (
          <button
            key={item.label}
            type="button"
            aria-label={item.label}
            className={clsx(
              'flex size-6 items-center rounded-[3px] pl-[3px]',
              item.active && 'bg-[#adadad]',
              item.muted ? 'text-[#c2c2c2]' : 'text-[#444]',
            )}
          >
            <Icon w={17}>{item.icon}</Icon>
          </button>
        ))}
      </div>
      <span className="mt-3 h-px w-[30px] bg-[#c4c4c4]" />
      <button type="button" aria-label="更多" className="mt-[22px] text-[#888]">
        <Icon w={14} h={4}>
          <circle cx="2" cy="2" r="1.200" />
          <circle cx="7" cy="2" r="1.200" />
          <circle cx="12" cy="2" r="1.200" />
        </Icon>
      </button>
    </div>
  );
}

/* ---------- status bar ---------- */

function StatusBar() {
  return (
    <footer className="flex h-7 shrink-0 items-center bg-[#e8e8e8] pr-[15px] pl-[15px] text-[#444]">
      <Icon w={16}>
        <path d="M.5 1.500h9v5h-9zM7 4l3.500-2.500v5L7 4M2.500 10.500h10v4h-10zM4 7v3.500M8 7v3.500M11 4h4.500v4h-2v4" />
      </Icon>
      <span className="ml-[15px] h-6 w-px bg-[#d0d0d0]" />
      <span className="ml-3 flex items-center gap-[5px] text-[#5b7f2e]">
        <Icon w={14} h={16} className="text-[#888]">
          <path d="M7 .5l6.500 2.500v6Q13 13 7 15.500 1 13 .5 9V3z" />
          <circle cx="7" cy="6" r="1.500" />
          <path d="M7 7.500V12M7 10h1.500" />
        </Icon>
        文档已保护
      </span>
      <span className="ml-3 h-6 w-px bg-[#d0d0d0]" />
      <div className="ml-auto flex items-center">
        <button type="button" aria-label="全屏显示">
          <Icon w={15}>
            <path d="M.5 6V.5H5M14.500 9v5.500H10" />
            <path d="M9 6l5-5M10 .5h4.500V5M6 9l-5 5M.5 10v4.500H5" stroke={GREEN} />
          </Icon>
        </button>
        <button type="button" aria-label="普通视图" className="ml-[6px] flex size-6 items-center justify-center rounded-[3px] bg-[#b8b8b8]">
          <Icon w={16} h={15}>
            <path d="M.5 1.500q0-1 1-1h13q1 0 1 1v12q0 1-1 1h-13q-1 0-1-1zM0 5h16M0 10h16M5.500 0v15M10.500 0v15" stroke="#333" />
          </Icon>
        </button>
        <button type="button" aria-label="分页预览" className="ml-[6px]">
          <Icon w={16} h={15}>
            <path d="M.5 4V.5H5M7 .5h2M13 .5h2.500V5M15.500 10v4.500H12M.5 11v3.500H4M6 14.500h3M0 7.500h15M10.500 0v15" />
          </Icon>
        </button>
        <button type="button" aria-label="页面布局" className="ml-[9px] flex items-center gap-[2px]">
          <Icon w={16}>
            <path d="M4.500.5h7v15h-7zM.5 5.500h15v5H.5z" />
          </Icon>
          <Caret />
        </button>
        <button type="button" aria-label="护眼模式" className="ml-2">
          <Icon w={18} h={16}>
            <path d="M1 10Q9 1 17 10 9 19 1 10zM9 0v4M3 1.500l2 3M15 1.500l-2 3" />
            <circle cx="9" cy="10" r="3" />
            <circle cx="9" cy="10" r="1" />
          </Icon>
        </button>
        <span className="ml-3 h-6 w-px bg-[#d0d0d0]" />
        <button type="button" className="ml-[10px] flex items-center gap-1 font-['Open_Sans',sans-serif] text-[13px]">
          100%
          <Caret />
        </button>
        <button type="button" aria-label="缩小" className="ml-[10px]">
          <Icon w={12}>
            <path d="M0 6h12" strokeWidth="2" />
          </Icon>
        </button>
        <input
          type="range"
          aria-label="缩放"
          min="0"
          max="100"
          defaultValue="50"
          className="mx-[11px] h-4 w-[138px] appearance-none bg-[linear-gradient(#666,#666)] bg-[length:100%_1px] bg-center bg-no-repeat [&::-webkit-slider-thumb]:size-3 [&::-webkit-slider-thumb]:appearance-none [&::-webkit-slider-thumb]:rounded-full [&::-webkit-slider-thumb]:border [&::-webkit-slider-thumb]:border-[#444] [&::-webkit-slider-thumb]:bg-[#e8e8e8]"
        />
        <button type="button" aria-label="放大">
          <Icon w={12}>
            <path d="M0 6h12M6 0v12" strokeWidth="2" />
          </Icon>
        </button>
      </div>
    </footer>
  );
}

/* ---------- floating widgets ---------- */

function MonitorWidget() {
  return (
    <>
      <div className="absolute top-[446px] right-0 z-20 h-[130px] w-11 rounded-l-[10px] bg-[#82848c]/70" />
      <div className="absolute top-[446px] right-0 z-40 h-[130px] w-11 font-['Open_Sans',sans-serif] text-white">
        <svg width="16" height="18" viewBox="0 0 16 18" className="absolute top-[6px] left-[14px]" aria-hidden="true">
          <path d="M8 0l7 2.500v7Q14 15 8 17.500 2 15 1 9.500v-7z" fill="#0dbd5f" />
          <path d="M4.500 8.500L7 11l5-5.500" fill="none" stroke="#fff" strokeWidth="2" />
        </svg>
        <p className="absolute top-[35px] left-2 text-[15px] leading-5 font-bold">
          63<span className="text-[10px] font-normal text-[#d4d4d6]">%</span>
        </p>
        <div className="absolute top-[54px] left-2 flex h-1 w-7 overflow-hidden rounded-full bg-[#4b4d58]">
          <span className="w-[60%] bg-linear-to-r from-[#3fc1a8] via-[#8fc93f] to-[#f0b400]" />
        </div>
        <svg width="6" height="40" viewBox="0 0 6 40" className="absolute top-[78px] left-1" aria-hidden="true">
          <path d="M3 1l3 4H3.500v5h-1V5H0z" fill="#1fa0f5" />
          <path d="M3 37l3-4H3.500v-4h-1v4H0z" fill="#0dbd5f" />
        </svg>
        <dl className="absolute top-[70px] left-4 text-[11px] leading-[14px]">
          <dt>0.0</dt>
          <dd className="text-[10px] leading-3 text-[#d8d8da]">K/s</dd>
          <dt className="mt-[2px]">0.2</dt>
          <dd className="text-[10px] leading-3 text-[#d8d8da]">K/s</dd>
        </dl>
      </div>
    </>
  );
}

function ImeBar() {
  return (
    <div className="absolute right-[38px] bottom-[104px] z-20 flex h-[26px] w-[144px] items-center gap-[11px] border border-[#b4cde8] bg-white pl-6 text-[#0a6cd6]">
      <svg width="32" height="32" viewBox="0 0 32 32" className="absolute -top-[5px] -left-[10px]" aria-hidden="true">
        <rect x="3" y="3" width="26" height="26" rx="4" fill="#f4511e" transform="rotate(-12 16 16)" />
        <path d="M25 8Q8 5 8.500 12q.5 3 7.500 3.500t7.500 4q0 6-16 3.500" fill="none" stroke="#fff" strokeWidth="4" />
      </svg>
      <span className="ml-[2px] text-[15px] leading-4 font-bold">中</span>
      <Icon w={12}>
        <circle cx="3" cy="3" r="1.800" strokeWidth="1.500" />
        <path d="M8 5.500h3.500q0 4.500-3 6" fill="currentColor" stroke="none" />
      </Icon>
      <Icon w={13} h={16}>
        <rect x="4" y="0" width="5" height="9" rx="2.500" fill="currentColor" stroke="none" />
        <path d="M1.500 6q0 5 5 5t5-5M6.500 11v2M4 15h5" strokeWidth="1.500" />
      </Icon>
      <Icon w={15} h={12}>
        <rect x=".8" y=".8" width="13.400" height="10.400" rx="1" strokeWidth="1.600" />
        <path d="M3 3.500h9M3 6h9" strokeDasharray="2 1.300" strokeWidth="1.500" />
        <path d="M4.500 8.800h6" strokeWidth="1.300" />
      </Icon>
      <Icon w={14}>
        <path d="M1.500 0H6v6H0V1.500zM0 8h6v6H1.500L0 12.500zM8 8h6v4.500L12.500 14H8z" fill="currentColor" stroke="none" />
        <rect x="8.800" y=".8" width="4.400" height="4.400" rx="1" strokeWidth="1.600" />
      </Icon>
    </div>
  );
}

function SiteBadge() {
  return (
    <div className="pointer-events-none absolute right-[10px] bottom-1 z-20 flex items-center">
      <svg width="44" height="42" viewBox="0 0 44 42" aria-hidden="true">
        <defs>
          <linearGradient id="leaf" x1="0" y1="1" x2="1" y2="0">
            <stop offset="0" stopColor="#c9cf4a" />
            <stop offset="1" stopColor="#57b884" />
          </linearGradient>
        </defs>
        <path d="M43 3Q14-2 4 17-1 27 6 31 5 20 17 12 27 6 43 3z" fill="#4a93cf" />
        <path d="M10 28Q18 14 37 7 24 17 10 28z" fill="#6fb0dc" />
        <path d="M35 13q8 10-2 19-8 7-28 9 19-6 24-13 4-6-6-7 8-2 12-8z" fill="url(#leaf)" />
      </svg>
      <div>
        <p className="text-[21px] leading-6 font-bold text-[#5b9bd5]">极光下载站</p>
        <p className="font-['Liberation_Sans',sans-serif] text-[16px] leading-5 font-bold text-[#5fb56f]/90">www.xz7.com</p>
      </div>
    </div>
  );
}

export default function App() {
  return (
    <div className="relative flex h-screen flex-col overflow-hidden bg-[#d8d8d8] font-['Noto_Sans_CJK_SC',sans-serif] text-[12px] leading-4">
      <TitleBar />
      <MenuBar />
      <Ribbon />
      <div className="flex min-h-0 flex-1">
        <main className="flex min-w-0 flex-1 flex-col">
          <FormulaBar />
          <Sheet />
          <SheetTabs />
        </main>
        <SelectionPane />
        <SideRail />
      </div>
      <StatusBar />
      <MonitorWidget />
      <ImeBar />
      <SiteBadge />
    </div>
  );
}
